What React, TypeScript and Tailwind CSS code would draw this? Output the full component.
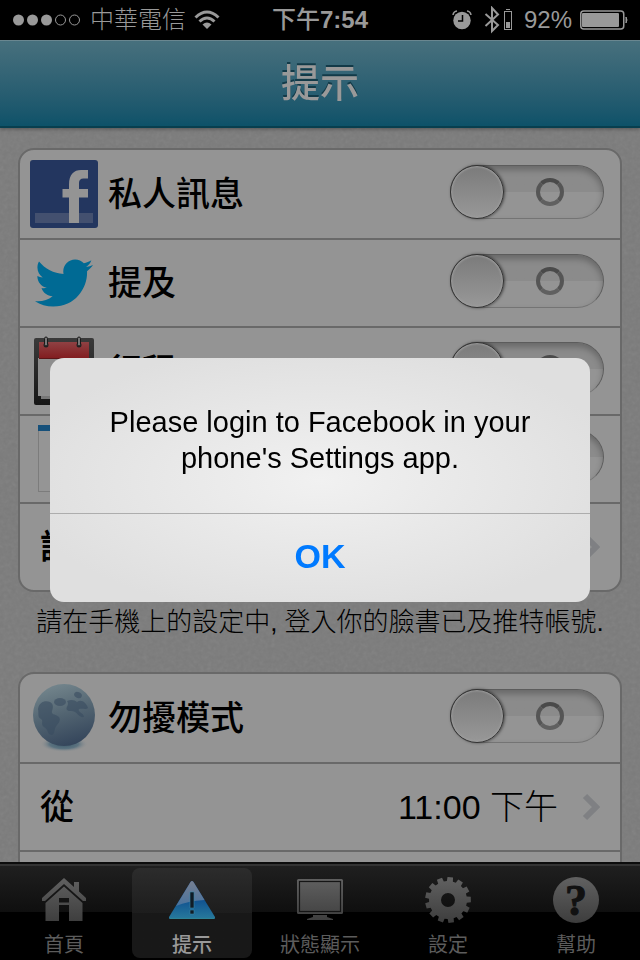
import type { ReactNode } from "react";
import { FaTwitter } from "react-icons/fa";

const gearPath = () => {
  const teeth = 13;
  const step = (Math.PI * 2) / teeth;
  const points: string[] = [];
  for (let i = 0; i < teeth; i++) {
    const mid = -Math.PI / 2 + 0.1 + i * step;
    [
      [19, -0.33],
      [23, -0.25],
      [23, 0.25],
      [19, 0.33],
    ].forEach(([r, k]) => {
      const a = mid + k * step;
      points.push(`${(24 + r * Math.cos(a)).toFixed(2)} ${(24 + r * Math.sin(a)).toFixed(2)}`);
    });
  }
  return `M${points.join("L")}ZM31 24a7 7 0 1 0-14 0a7 7 0 1 0 14 0Z`;
};

function FacebookIcon() {
  return (
    <svg width="68" height="68" viewBox="0 0 68 68">
      <rect width="68" height="68" rx="3" fill="#23365f" />
      <rect x="5" y="53" width="58" height="10" fill="#43506f" />
      <path
        d="M39 63V37.5H32.5V29H39V24.5C39 14.500 44 10 51 10H58V18.500H53.500C50.500 18.500 49 20 49 23V29H58V37.500H49V63Z"
        fill="#949494"
      />
    </svg>
  );
}

function CalendarIcon() {
  return (
    <svg width="60" height="70" viewBox="0 0 60 70">
      <defs>
        <linearGradient id="calRed" x2="0" y2="1">
          <stop offset="0" stopColor="#8f4143" />
          <stop offset="1" stopColor="#821d20" />
        </linearGradient>
        <linearGradient id="calFrame" x2="0" y2="1">
          <stop offset="0" stopColor="#3a3a3a" />
          <stop offset="1" stopColor="#161616" />
        </linearGradient>
      </defs>
      <rect y="2" width="60" height="67" rx="2" fill="url(#calFrame)" />
      <rect x="7" y="24" width="49" height="39" fill="#777" />
      <rect x="4" y="22" width="51" height="38" fill="#8e8e8e" />
      <rect x="5" y="6" width="50" height="16" fill="url(#calRed)" />
      <path d="M5 22.500H55" stroke="#5b1517" />
      {[12, 45].map((x) => (
        <g key={x}>
          <circle cx={x} cy="9" r="2.500" fill="#222" />
          <rect x={x - 1.5} y="1" width="3" height="9" rx="1.500" fill="#777" stroke="#1a1a1a" />
        </g>
      ))}
    </svg>
  );
}

function NoteIcon() {
  return (
    <svg width="52" height="68" viewBox="0 0 52 68">
      <rect x=".5" y=".5" width="51" height="66" fill="#959595" stroke="#7c7c7c" />
      <rect width="52" height="6" fill="#16507a" />
    </svg>
  );
}

function MoonIcon() {
  return (
    <svg width="64" height="72" viewBox="0 0 64 72">
      <defs>
        <linearGradient id="moon" x1=".3" y1="0" x2=".6" y2="1">
          <stop offset="0" stopColor="#74868d" />
          <stop offset=".5" stopColor="#526471" />
          <stop offset="1" stopColor="#34455b" />
        </linearGradient>
        <radialGradient id="moonGlow">
          <stop offset="0" stopColor="#3c5a6b" />
          <stop offset=".6" stopColor="#5c7380" />
          <stop offset="1" stopColor="#949494" stopOpacity="0" />
        </radialGradient>
      </defs>
      <ellipse cx="32" cy="62" rx="24" ry="8" fill="url(#moonGlow)" />
      <circle cx="32" cy="33" r="31" fill="url(#moon)" />
      <g fill="#394c60" opacity=".6">
        <path d="M6 27C7 20 13 18 18 20C22 22 21 26 20 29C19 33 24 32 27 35C29 38 27 41 25 43C22 46 23 52 20 53C15 53 17 48 12 45C8 42 12 39 9 37C5 35 7 31 6 27Z" />
        <ellipse cx="28" cy="20" rx="6" ry="4" />
        <path d="M35 19C39 17 43 18 45 20C49 17 54 20 56 26C54 28 50 26 47 27C45 30 52 31 52 35C48 36 46 32 43 30C40 28 37 30 35 28C33 25 38 23 35 19Z" />
        <ellipse cx="46" cy="13" rx="4" ry="3" transform="rotate(25 46 13)" />
      </g>
    </svg>
  );
}

function Switch({ id }: { id: string }) {
  return (
    <input
      id={id}
      type="checkbox"
      role="switch"
      className="mb-1 flex h-[54px] w-[154px] shrink-0 appearance-none items-center rounded-full border border-[#5c5c5c] border-b-[#747474] bg-linear-to-b from-[#8b8b8b] from-50% to-[#949494] to-50% shadow-[inset_0_4px_6px_rgba(0,0,0,0.25)] before:-ml-px before:h-[54px] before:w-[54px] before:shrink-0 before:rounded-full before:border before:border-[#333] before:bg-linear-to-b before:from-[#7b7b7b] before:to-[#989898] before:shadow-[1px_0_3px_rgba(0,0,0,0.5),inset_0_0_2px_1px_#9d9d9d] before:content-[''] after:ml-[32px] after:h-[28px] after:w-[28px] after:rounded-full after:border-4 after:border-[#555] after:border-t-[#4a4a4a] after:border-b-[#606060] after:content-['']"
    />
  );
}

function Chevron() {
  return (
    <svg width="18" height="28" viewBox="0 0 18 28" className="shrink-0">
      <path d="M3 3L14 14L3 25" fill="none" stroke="#7f8083" strokeWidth="6" />
    </svg>
  );
}

const toggles = [
  { id: "messages", label: "私人訊息", icon: <FacebookIcon /> },
  { id: "mentions", label: "提及", icon: <FaTwitter size={58} color="#006a94" /> },
  { id: "calendar", label: "行程", icon: <CalendarIcon /> },
  { id: "reminders", label: "提醒", icon: <NoteIcon /> },
];

function ToggleRow({ id, label, icon }: { id: string; label: string; icon: ReactNode }) {
  return (
    <div className="flex h-[88px] items-center border-b-2 border-[#696969] pr-4 pl-[10px] first:h-[90px]">
      <div className="flex w-[68px] shrink-0 justify-center">{icon}</div>
      <label htmlFor={id} className="ml-[10px] flex-1 text-[34px] leading-[40px] font-medium">
        {label}
      </label>
      <Switch id={id} />
    </div>
  );
}

function StatusBar() {
  return (
    <div className="grid h-10 shrink-0 grid-cols-[1fr_auto_1fr] items-center bg-black px-3 text-[24px] leading-[32px] text-[#999]">
      <div className="flex items-center">
        <svg width="70" height="12" viewBox="0 0 70 12">
          {[0, 1, 2, 3, 4].map((i) => (
            <circle
              key={i}
              cx={6.5 + i * 14}
              cy="6"
              r={i < 3 ? 5.5 : 5}
              fill={i < 3 ? "#999" : "none"}
              stroke={i < 3 ? "none" : "#999"}
            />
          ))}
        </svg>
        <span className="ml-2 font-light">中華電信</span>
        <svg width="26" height="20" viewBox="0 0 26 20" className="ml-2">
          <g fill="none" stroke="#999" strokeWidth="3">
            <path d="M1.500 7.500Q13 -3.500 24.500 7.500" />
            <path d="M5.500 11.500Q13 4.500 20.500 11.500" />
          </g>
          <path d="M8.500 14.500Q13 10.500 17.500 14.500L13 19Z" fill="#999" />
        </svg>
      </div>
      <span className="font-medium">
        下午<span className="font-bold">7:54</span>
      </span>
      <div className="flex items-center justify-end">
        <svg width="20" height="20" viewBox="0 0 20 20">
          <circle cx="10" cy="10.500" r="8.700" fill="#999" />
          <path d="M1 5Q1.500 1.500 5 1M19 5Q18.500 1.500 15 1" fill="none" stroke="#999" strokeWidth="1.500" />
          <path d="M10.500 5V11H6" fill="none" stroke="#000" strokeWidth="1.500" />
        </svg>
        <svg width="16" height="28" viewBox="0 0 16 28" className="ml-3">
          <path d="M1.500 8L14 19L8 25V2L14 8.500L1.500 20" fill="none" stroke="#999" strokeWidth="2" />
        </svg>
        <svg width="8" height="22" viewBox="0 0 8 22" className="ml-1">
          <path d="M2 .5H6" stroke="#999" />
          <rect x=".5" y="2.500" width="7" height="18" fill="none" stroke="#999" />
          <rect x="2" y="13" width="4" height="6" fill="#999" />
        </svg>
        <span className="ml-3 font-light">92%</span>
        <svg width="48" height="20" viewBox="0 0 48 20" className="ml-2">
          <rect x=".75" y="1" width="43" height="18" rx="3" fill="none" stroke="#999" strokeWidth="1.500" />
          <rect x="2" y="3" width="37" height="14" rx="1" fill="#999" />
          <path d="M46 7Q48 10 46 13Z" fill="#999" stroke="#999" />
        </svg>
      </div>
    </div>
  );
}

const tabs = [
  {
    label: "首頁",
    icon: (
      <g fill="url(#tabGray)">
        <path d="M24 2L34 11V6H39V15.500L46 22V25H43L24 8L5 25H2V22Z" />
        <path d="M24 10.500L42.500 27V45H29V29H19V45H5.500V27Z" />
        <path d="M19 22H29V26.500H19Z" fill="#141414" />
      </g>
    ),
  },
  {
    label: "提示",
    active: true,
    icon: (
      <g>
        <path d="M22.500 6Q24 4 25.500 6L47 41Q47.500 43 46 43H2Q.5 43 1 41Z" fill="url(#tabBlue)" />
        <path d="M22.500 6Q24 4 25.500 6L36.500 24Q20 25 8 30Z" fill="url(#tabShine)" />
        <path d="M2 42.500H46" stroke="#2c8296" />
        <path d="M22 16H26V32H22ZM22 34H26V38H22Z" fill="#101c26" stroke="#3a86a4" strokeWidth=".6" />
      </g>
    ),
  },
  {
    label: "狀態顯示",
    icon: (
      <g fill="url(#tabGray)">
        <rect x="1" y="3" width="46" height="35" rx="1.500" />
        <rect x="3.500" y="5.500" width="41" height="30" fill="none" stroke="#151515" strokeWidth="1.200" />
        <path d="M17 39H31V41L37 43V44H11V43L17 41Z" />
      </g>
    ),
  },
  { label: "設定", icon: <path d={gearPath()} fill="url(#tabGray)" fillRule="evenodd" /> },
  {
    label: "幫助",
    icon: (
      <g>
        <circle cx="24" cy="24" r="23" fill="url(#tabGray)" />
        <text
          x="24"
          y="39"
          textAnchor="middle"
          fontSize="44"
          fontWeight="700"
          fontFamily="Liberation Serif, serif"
          fill="#111"
          stroke="#111"
        >
          ?
        </text>
      </g>
    ),
  },
];

function TabBar() {
  return (
    <nav className="grid h-[98px] shrink-0 grid-cols-5 border-t-2 border-[#0c0c0c] bg-linear-to-b from-[#202020] via-[#0f0f0f] via-50% to-black to-50% shadow-[inset_0_2px_0_#333]">
      {tabs.map((tab) => (
        <button
          key={tab.label}
          className={`mx-1 my-1 flex flex-col items-center rounded-lg pt-2 text-[20px] leading-[26px] ${
            tab.active
              ? "bg-linear-to-b from-[#2c2c2c] via-[#1d1d1d] via-50% to-[#181818] to-50% font-medium text-[#999]"
              : "text-[#5c5c5c]"
          }`}
        >
          <svg width="48" height="48" viewBox="0 0 48 48">
            <defs>
              <linearGradient id="tabGray" gradientUnits="userSpaceOnUse" x1="0" y1="0" x2="0" y2="48">
                <stop offset="0" stopColor="#626262" />
                <stop offset="1" stopColor="#3c3c3c" />
              </linearGradient>
              <linearGradient id="tabBlue" x2="0" y2="1">
                <stop offset=".4" stopColor="#0b4a8e" />
                <stop offset="1" stopColor="#287a9c" />
              </linearGradient>
              <linearGradient id="tabShine" x2="0" y2="1">
                <stop offset="0" stopColor="#777f91" />
                <stop offset="1" stopColor="#48739e" />
              </linearGradient>
            </defs>
            {tab.icon}
          </svg>
          <span className="mt-2">{tab.label}</span>
        </button>
      ))}
    </nav>
  );
}

function Alert() {
  return (
    <div className="fixed inset-0 flex items-center justify-center px-[50px]">
      <div
        role="alertdialog"
        aria-describedby="alert-text"
        className="w-full max-w-[540px] overflow-hidden rounded-[14px] bg-[#e0e0e0] bg-[radial-gradient(ellipse_at_center,#f1f1f1_0%,#e8e8e8_40%,#dfdfdf_80%)] text-center"
      >
        <p id="alert-text" className="px-[50px] pt-[46px] pb-[37px] text-[29px] leading-[36px] text-black">
          Please login to Facebook in your phone's Settings app.
        </p>
        <button className="h-[89px] w-full border-t border-[#adadad] pb-1 text-[34px] leading-[40px] font-bold text-[#007aff]">
          OK
        </button>
      </div>
    </div>
  );
}

export default function App() {
  return (
    <div className="flex h-screen flex-col overflow-hidden bg-[#7b7b7b] font-['Liberation_Sans','Noto_Sans_CJK_TC',sans-serif] text-black">
      <StatusBar />
      <header className="z-10 flex h-[88px] shrink-0 items-center justify-center border-t border-b-2 border-t-[#6a8790] border-b-[#083f4f] bg-linear-to-b from-[#47707d] to-[#0d5269] shadow-[0_1px_4px_rgba(0,0,0,0.35)]">
        <h1 className="text-[39px] leading-[48px] font-medium text-[#999] [text-shadow:0_-2px_0_#123a48]">提示</h1>
      </header>

      <main className="relative flex-1 overflow-hidden px-[18px] pt-5">
        {/* paper grain */}
        <svg className="absolute inset-0 h-full w-full opacity-10" aria-hidden="true">
          <filter id="grain">
            <feTurbulence type="fractalNoise" baseFrequency="0.25" numOctaves="3" />
            <feColorMatrix type="saturate" values="0" />
          </filter>
          <rect width="100%" height="100%" filter="url(#grain)" />
        </svg>

        <section className="relative rounded-[16px] border-2 border-[#696969] bg-[#949494]">
          {toggles.map((row) => (
            <ToggleRow key={row.id} {...row} />
          ))}
          <button className="flex h-[86px] w-full items-center justify-between pr-5 pl-5 text-[34px] leading-[40px] font-bold">
            訊息
            <Chevron />
          </button>
        </section>

        <p className="relative py-[10px] text-center text-[26px] leading-[40px] font-light whitespace-nowrap">
          請在手機上的設定中, 登入你的臉書已及推特帳號.
        </p>

        <section className="relative mt-5 rounded-t-[16px] border-2 border-[#696969] bg-[#949494]">
          <ToggleRow id="dnd" label="勿擾模式" icon={<MoonIcon />} />
          <button className="flex h-[88px] w-full items-center border-b-2 border-[#696969] pr-5 pl-5 text-[34px] leading-[40px]">
            <span className="flex-1 text-left font-medium">從</span>
            <span className="font-light">11:00 下午</span>
            <span className="ml-6">
              <Chevron />
            </span>
          </button>
          <div className="h-[86px]" />
        </section>
      </main>

      <TabBar />
      <Alert />
    </div>
  );
}
